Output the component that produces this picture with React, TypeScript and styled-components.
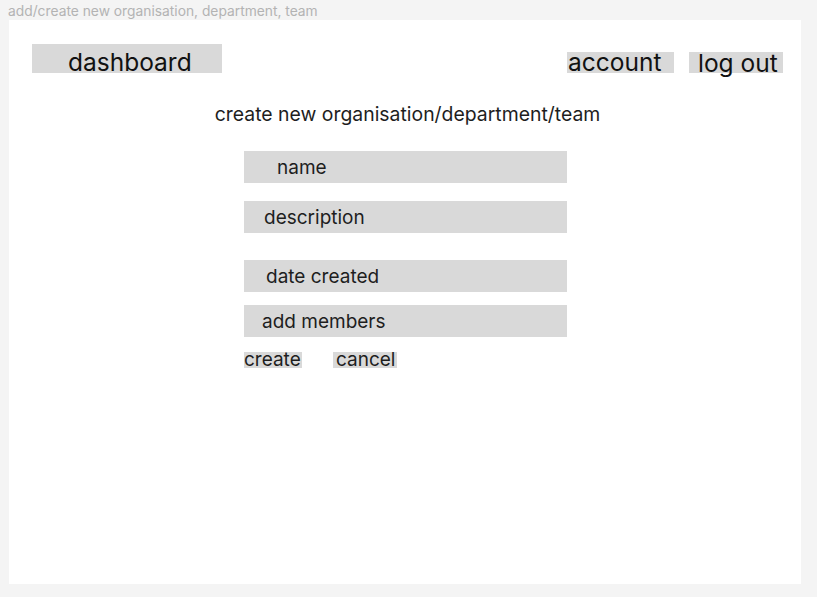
import React from "react";
import styled, { createGlobalStyle } from "styled-components";

const Global = createGlobalStyle`
  html, body { margin: 0; padding: 0; background: #f4f4f4; }
  body { font-family: Inter, "Noto Sans", sans-serif; color: #1e1e1e; }
`;

const Page = styled.div`
  width: 817px;
  height: 597px;
  background: #f4f4f4;
  display: flex;
  flex-direction: column;
  overflow: hidden;
`;

const FrameTitle = styled.div`
  height: 20px;
  padding-left: 8px;
  font-size: 13.8px;
  line-height: 23px;
  color: #b3b3b3;
  white-space: nowrap;
`;

const Frame = styled.div`
  margin-left: 9px;
  width: 792px;
  height: 564px;
  background: #ffffff;
  display: flex;
  flex-direction: column;
  box-sizing: border-box;
  padding: 24px 18px 0 23px;
`;

const Header = styled.div`
  display: flex;
  align-items: flex-end;
  justify-content: space-between;
`;

const NavRight = styled.div`
  display: flex;
  align-items: flex-end;
  gap: 15px;
`;

const NavButton = styled.div<{ $w: number; $h: number; $pl: number; $lh: number }>`
  width: ${(p) => p.$w}px;
  height: ${(p) => p.$h}px;
  box-sizing: border-box;
  padding-left: ${(p) => p.$pl}px;
  background: #d9d9d9;
  font-size: 24.5px;
  line-height: ${(p) => p.$lh}px;
  color: #111;
  white-space: nowrap;
  overflow: visible;
`;

const Heading = styled.div`
  margin-top: 29px;
  text-align: center;
  font-size: 19.4px;
  line-height: 24px;
  color: #1e1e1e;
  white-space: nowrap;
`;

const Form = styled.div`
  margin-left: 212px;
  width: 323px;
  display: flex;
  flex-direction: column;
`;

const Field = styled.div<{ $mt: number; $indent: number }>`
  margin-top: ${(p) => p.$mt}px;
  height: 32px;
  background: #d9d9d9;
  box-sizing: border-box;
  padding-left: ${(p) => p.$indent}px;
  font-size: 19px;
  line-height: 33px;
  color: #1e1e1e;
`;

const Actions = styled.div`
  margin-top: 15px;
  display: flex;
  gap: 31px;
`;

const Action = styled.div<{ $w: number; $pl: number }>`
  width: ${(p) => p.$w}px;
  height: 16px;
  box-sizing: border-box;
  padding-left: ${(p) => p.$pl}px;
  background: #d9d9d9;
  font-size: 19px;
  line-height: 16px;
  color: #1e1e1e;
  white-space: nowrap;
`;

const fields = [
  { label: "name", mt: 25, indent: 33 },
  { label: "description", mt: 18, indent: 20 },
  { label: "date created", mt: 27, indent: 22 },
  { label: "add members", mt: 13, indent: 18 },
];

export default function App() {
  return (
    <Page>
      <Global />
      <FrameTitle>add/create new organisation, department, team</FrameTitle>
      <Frame>
        <Header>
          <NavButton $w={190} $h={29} $pl={36} $lh={37}>dashboard</NavButton>
          <NavRight>
            <NavButton $w={107} $h={21} $pl={1} $lh={21}>account</NavButton>
            <NavButton $w={94} $h={21} $pl={9} $lh={23}>log out</NavButton>
          </NavRight>
        </Header>
        <Heading>create new organisation/department/team</Heading>
        <Form>
          {fields.map((f) => (
            <Field key={f.label} $mt={f.mt} $indent={f.indent}>{f.label}</Field>
          ))}
          <Actions>
            <Action $w={58} $pl={0}>create</Action>
            <Action $w={64} $pl={3}>cancel</Action>
          </Actions>
        </Form>
      </Frame>
    </Page>
  );
}
